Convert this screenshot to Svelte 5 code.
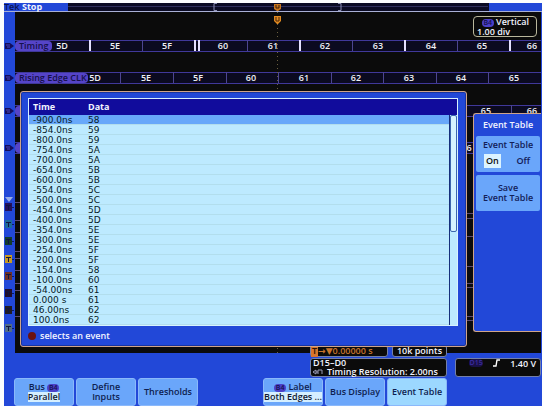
<script lang="ts">
  interface Cell {
    x: number;
    label: string;
  }

  interface Lane {
    top: number;
    name: string;
    tagWidth: number;
    edges: number[];
    glitches: number[];
    cells: Cell[];
  }

  const lanes: Lane[] = [
    {
      top: 28,
      name: 'Timing',
      tagWidth: 37,
      edges: [127, 232, 337, 442],
      glitches: [75, 180, 184, 285, 390, 495],
      cells: [
        { x: 47, label: '5D' },
        { x: 100, label: '5E' },
        { x: 152, label: '5F' },
        { x: 208, label: '60' },
        { x: 258, label: '61' },
        { x: 310, label: '62' },
        { x: 363, label: '63' },
        { x: 416, label: '64' },
        { x: 467, label: '65' },
        { x: 517, label: '66' }
      ]
    },
    {
      top: 60,
      name: 'Rising Edge CLK',
      tagWidth: 73,
      edges: [105, 158, 211, 263, 316, 368, 421, 473],
      glitches: [],
      cells: [
        { x: 80, label: '5D' },
        { x: 131, label: '5E' },
        { x: 183, label: '5F' },
        { x: 236, label: '60' },
        { x: 289, label: '61' },
        { x: 341, label: '62' },
        { x: 394, label: '63' },
        { x: 446, label: '64' },
        { x: 499, label: '65' }
      ]
    },
    {
      top: 93,
      name: '',
      tagWidth: 60,
      edges: [444, 496],
      glitches: [],
      cells: [
        { x: 471, label: '65' },
        { x: 517, label: '66' }
      ]
    },
    {
      top: 130,
      name: '',
      tagWidth: 60,
      edges: [444, 496],
      glitches: [],
      cells: [{ x: 454, label: '6' }]
    }
  ];

  const events = [
    ['-900.0ns', '58'],
    ['-854.0ns', '59'],
    ['-800.0ns', '59'],
    ['-754.0ns', '5A'],
    ['-700.0ns', '5A'],
    ['-654.0ns', '5B'],
    ['-600.0ns', '5B'],
    ['-554.0ns', '5C'],
    ['-500.0ns', '5C'],
    ['-454.0ns', '5D'],
    ['-400.0ns', '5D'],
    ['-354.0ns', '5E'],
    ['-300.0ns', '5E'],
    ['-254.0ns', '5F'],
    ['-200.0ns', '5F'],
    ['-154.0ns', '58'],
    ['-100.0ns', '60'],
    ['-54.00ns', '61'],
    ['0.000 s', '61'],
    ['46.00ns', '62'],
    ['100.0ns', '62']
  ];

  // digital channel markers, y inside the gutter
  const channels = [
    { y: 191, color: '#24105c' },
    { y: 208, color: '#1c6a9c' },
    { y: 225, color: '#123d2c' },
    { y: 243, color: '#c89a24' },
    { y: 260, color: '#6c3026' },
    { y: 277, color: '#200e2c' },
    { y: 294, color: '#201c24' },
    { y: 312, color: '#516c8a' }
  ];

  let selected = $state(0);
  let tableOn = $state(true);
</script>

<main class="screen">
  <header class="topbar">
    <span class="brand">Tek</span>
    <span class="run-state">Stop</span>
    <svg class="record" width="100%" height="8" aria-hidden="true">
      <path d="M0 3.5h420" stroke="#30305c" />
      <path d="M149 .5h-3v7h3M270 .5h3v7h-3" stroke="#8d8fb4" fill="none" />
      <path d="M206 1h7v5l-3 2h-1l-3-2z" fill="#c8761e" />
      <path d="M208 2v3h3v-3" stroke="#3a1c08" fill="none" />
    </svg>
  </header>

  <div class="display">
    <svg class="gutter" width="11" height="341" aria-hidden="true">
      {#each [34, 66, 99, 136] as y}
        <path d="M1 {y - 3}h5l4 3-4 3h-5z" fill="#140d5c" />
        <path d="M2 {y - 1}h4M3 {y + 1}h3" stroke="#4b46bd" />
      {/each}
      <path d="M1 185h8l-4 5z" fill="#9aaee8" />
      {#each channels as channel}
        <rect x="1" y={channel.y} width="7" height="8" fill={channel.color} />
        <path d="M2 {channel.y + 2.5}h5M4.5 {channel.y + 2}v5" stroke="#101440" fill="none" />
        <path d="M8 {channel.y + 4.5}h2" stroke="#0c1c60" />
      {/each}
    </svg>

    <section class="stage">
      <svg class="traces" width="100%" height="341">
        {#each lanes as lane}
          <rect class="lane" x="-2" y={lane.top + 0.5} width="540" height="11" />
          {#each lane.edges as x}
            <path class="edge" d="M{x + 0.5} {lane.top}v11" />
          {/each}
          {#each lane.glitches as x}
            <path class="glitch" d="M{x} {lane.top}v11" />
          {/each}
          {#each lane.cells as cell}
            <text class="value" x={cell.x} y={lane.top + 9}>{cell.label}</text>
          {/each}
          <rect class="tag" x="0" y={lane.top + 1} width={lane.tagWidth} height="10" rx="4" />
          {#if lane.name}
            <text class="tag-name" x="4" y={lane.top + 9}>{lane.name}</text>
          {/if}
        {/each}
        {#each [190, 208, 220, 239, 246, 258, 271, 278, 304] as y}
          <path class="digital" d="M0 {y + 0.5}h5" />
        {/each}
        {#each [201, 206, 224, 254, 271, 275, 304, 308] as y}
          <path class="digital" d="M450 {y + 0.5}h8" />
        {/each}
        <path class="trigger-line" d="M262.5 0v341" />
        <path d="M259 4h7v5l-3 3h-1l-3-3z" fill="#e28a20" />
        <path d="M261 5v4h3v-4" stroke="#4a2608" fill="none" />
      </svg>

      <aside class="vertical">
        <div class="vertical-head"><span class="chip">B4</span> Vertical</div>
        <div>1.00 div</div>
      </aside>

      {#if tableOn}
        <section class="dialog">
          <div class="list">
            <table>
              <thead>
                <tr><th>Time</th><th>Data</th></tr>
              </thead>
              <tbody>
                {#each events as [time, data], i}
                  <tr class:selected={i === selected} onclick={() => (selected = i)}>
                    <td>{time}</td>
                    <td>{data}</td>
                  </tr>
                {/each}
              </tbody>
            </table>
            <div class="scroll-track"><div class="scroll-thumb"></div></div>
          </div>
          <p class="hint"><span class="knob"></span>selects an event</p>
        </section>
      {/if}

      <aside class="side-menu">
        <h2>Event Table</h2>
        <button type="button" class="side-key" onclick={() => (tableOn = !tableOn)}>
          <span>Event Table</span>
          <span class="options">
            <span class="option" class:active={tableOn}>On</span>
            <span class="option" class:active={!tableOn}>Off</span>
          </span>
        </button>
        <button type="button" class="side-key">Save<br />Event Table</button>
      </aside>
    </section>
  </div>

  <section class="readouts">
    <div class="horizontal">
      <div class="pair">
        <div class="box delay"><span class="t-mark">T</span>→▼0.00000 s</div>
        <div class="box points">10k points</div>
      </div>
      <div class="box resolution">
        <div>D15–D0</div>
        <div class="timing">
          <svg width="10" height="7" aria-hidden="true">
            <path d="M0 4l3-2v4zM3 4h2M5 6v-4h4v4" stroke="#9a9cb8" fill="none" />
          </svg>
          <span>Timing Resolution: 2.00ns</span>
        </div>
      </div>
    </div>
    <div class="box trigger">
      <span class="chip dim">D15</span>
      <svg width="7" height="8" aria-hidden="true">
        <path d="M0 7h3l1-6h3" stroke="#fff" stroke-width="1.4" fill="none" />
      </svg>
      <span>1.40 V</span>
    </div>
  </section>

  <nav class="keys">
    <button type="button" class="key">
      <span>Bus <span class="chip">B4</span></span>
      <span class="current">Parallel</span>
    </button>
    <button type="button" class="key">Define<br />Inputs</button>
    <button type="button" class="key">Thresholds</button>
    <span class="key-gap"></span>
    <button type="button" class="key">
      <span><span class="chip">B4</span> Label</span>
      <span class="current">Both Edges ...</span>
    </button>
    <button type="button" class="key">Bus Display</button>
    <button type="button" class="key open">Event Table</button>
  </nav>
</main>

<style>
  :global(body) {
    background: #fdfefe;
  }

  .screen {
    margin: 3px 2px 5px 4px;
    background: #2248d8;
    color: #f2f4ff;
    font: 600 9px/10px 'Open Sans', 'DejaVu Sans', sans-serif;
    display: flow-root;
  }

  button {
    font: inherit;
    color: inherit;
    border: none;
    padding: 0;
    cursor: pointer;
  }

  .topbar {
    display: flex;
    height: 9px;
    padding-right: 53px;
    border-bottom: 1px solid #a9b0d6;
    box-sizing: border-box;
    line-height: 8px;
  }

  .brand {
    width: 18px;
    flex: none;
    color: #0c1450;
  }

  .run-state {
    width: 46px;
    flex: none;
    font-weight: bold;
  }

  .record {
    flex: 1;
    min-width: 0;
    background: #0b0b24;
  }

  .display {
    display: flex;
    padding-right: 1px;
  }

  .gutter {
    flex: none;
  }

  .stage {
    position: relative;
    flex: 1;
    min-width: 0;
    background: #0b0b0b;
  }

  .traces {
    display: block;
  }

  .lane {
    fill: #0b0a20;
    stroke: #40389a;
  }

  .edge {
    stroke: #4d4590;
  }

  .glitch {
    stroke: #e4e0ff;
    stroke-width: 2;
  }

  .value {
    fill: #f0f0f4;
    text-anchor: middle;
  }

  .tag {
    fill: #5544c8;
  }

  .tag-name {
    fill: #15104c;
  }

  .digital {
    stroke: #5b4a72;
  }

  .trigger-line {
    stroke: #6b6040;
    stroke-dasharray: 1 3;
  }

  .vertical {
    position: absolute;
    top: 4px;
    right: 4px;
    width: 64px;
    box-sizing: border-box;
    padding: 0 3px;
    border: 1px solid #b9b79c;
    border-radius: 4px;
    background: #0b0b0b;
    line-height: 9px;
  }

  .vertical-head {
    text-align: right;
    padding-right: 4px;
  }

  .chip {
    display: inline-block;
    width: 12px;
    border-radius: 4px;
    background: #4a3fc8;
    color: #15104c;
    font-size: 7px;
    line-height: 8px;
    text-align: center;
  }

  .dialog {
    position: absolute;
    z-index: 2;
    top: 79px;
    left: 5px;
    right: 74px;
    border: 1px solid #d0a488;
    border-radius: 3px;
    box-shadow: inset 0 0 0 1px #1734a0;
    background: #2248d8;
    padding: 6px 8px 0 7px;
  }

  .list {
    position: relative;
    border: 1px solid #d8f2ff;
    background: #bdeaff;
  }

  table {
    width: 100%;
    border-collapse: collapse;
    table-layout: fixed;
    text-align: left;
  }

  th,
  td {
    padding: 0 0 0 4px;
    height: 10px;
    line-height: 10px;
  }

  td {
    color: #061a26;
    font-family: 'DejaVu Sans', sans-serif;
    font-weight: normal;
  }

  th {
    height: 16px;
    font-weight: bold;
  }

  th:first-child {
    width: 51px;
  }

  thead {
    background: #110c9c;
  }

  tbody tr {
    box-shadow: inset 0 -1px #b2deed;
  }

  tbody tr.selected {
    background: #68a8fa;
  }

  .scroll-track {
    position: absolute;
    top: 16px;
    right: 0;
    bottom: 0;
    width: 8px;
    box-sizing: border-box;
    border-left: 1px solid #16307c;
    background: #bdeaff;
  }

  .scroll-thumb {
    height: 117px;
    border: 1px solid #3b66ae;
    border-radius: 2px;
    box-sizing: border-box;
    background: #d5f3ff;
  }

  .hint {
    display: flex;
    align-items: center;
    gap: 4px;
    height: 20px;
    margin: 0;
  }

  .knob {
    width: 8px;
    height: 8px;
    border-radius: 50%;
    background: #6c1210;
  }

  .side-menu {
    position: absolute;
    top: 101px;
    right: 0;
    width: 68px;
    height: 219px;
    box-sizing: border-box;
    border: 1px solid #d0a488;
    border-right: none;
    border-radius: 3px 0 0 3px;
    background: #2248d8;
    padding: 0 1px 0 2px;
    text-align: center;
  }

  .side-menu h2 {
    margin: 0;
    font: inherit;
    line-height: 22px;
  }

  .side-key {
    display: block;
    width: 100%;
    height: 36px;
    border-radius: 2px;
    background: #6aa6fa;
    color: #122058;
    margin-bottom: 3px;
  }

  .options {
    display: flex;
    justify-content: space-between;
    padding: 4px 8px 0;
  }

  .option {
    padding: 2px;
  }

  .option.active {
    background: #dcf4ff;
    color: #101010;
  }

  .readouts {
    position: relative;
    z-index: 1;
    display: flex;
    justify-content: flex-end;
    align-items: flex-end;
    gap: 8px;
    margin-top: -8px;
    padding: 0 1px 1px 0;
  }

  .horizontal {
    width: 137px;
    background: #2248d8;
  }

  .pair {
    display: flex;
    gap: 4px;
    height: 12px;
    margin-bottom: 1px;
  }

  .box {
    border: 1px solid #7480a8;
    border-radius: 3px;
    box-sizing: border-box;
    background: #0b0b0b;
    white-space: nowrap;
  }

  .delay {
    flex: 1;
    color: #c8742c;
  }

  .t-mark {
    background: #d8742c;
    color: #2a1206;
    padding: 0 1px;
  }

  .points {
    width: 55px;
    text-align: center;
  }

  .resolution {
    height: 19px;
    padding-left: 2px;
    line-height: 8px;
  }

  .timing {
    display: flex;
    align-items: center;
    gap: 4px;
    line-height: 9px;
  }

  .trigger {
    display: flex;
    align-items: flex-start;
    justify-content: flex-end;
    gap: 10px;
    width: 86px;
    height: 19px;
    padding-right: 4px;
  }

  .chip.dim {
    width: 14px;
    background: #1a1048;
    color: #3a2ca0;
  }

  .keys {
    display: flex;
    gap: 2px;
    padding: 0 95px 0 10px;
  }

  .key {
    width: 60px;
    height: 28px;
    display: flex;
    flex-direction: column;
    align-items: center;
    justify-content: center;
    border: 1px solid #8ab8fa;
    border-radius: 3px;
    background: #6aa6fa;
    color: #0e1e50;
    white-space: nowrap;
  }

  .key-gap {
    flex: 1;
  }

  .key.open {
    background: #9cd8ff;
  }

  .current {
    background: #d5efff;
    color: #101830;
  }
</style>
